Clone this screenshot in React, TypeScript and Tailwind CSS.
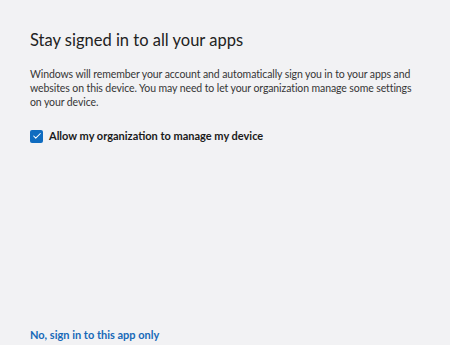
import { Check } from "lucide-react";

export default function App() {
  return (
    <div
      className="w-[450px] h-[345px] bg-[#f2f2f4] flex flex-col px-[30px] pt-[28px] pb-[3px] text-[#262626]"
      style={{ fontFamily: 'Lato, "Open Sans", sans-serif' }}
    >
      <h1 className="text-[16.5px] font-normal leading-[24px] text-[#222]">
        Stay signed in to all your apps
      </h1>

      <p className="mt-[15px] text-[10.5px] tracking-[-0.1px] leading-[14px] text-[#363636] whitespace-nowrap">
        Windows will remember your account and automatically sign you in to your apps and
        <br />
        websites on this device. You may need to let your organization manage some settings
        <br />
        on your device.
      </p>

      <label className="mt-[19px] flex items-center gap-[6px]">
        <span className="w-[13px] h-[13px] rounded-[2px] bg-[#0f6cc0] flex items-center justify-center">
          <Check className="w-[10px] h-[10px] text-white" strokeWidth={2.5} />
        </span>
        <span className="text-[11px] font-bold text-[#1a1a1a]">
          Allow my organization to manage my device
        </span>
      </label>

      <div className="flex-1" />

      <a className="text-[11px] font-bold text-[#1769b8] leading-[14px]">
        No, sign in to this app only
      </a>
    </div>
  );
}
